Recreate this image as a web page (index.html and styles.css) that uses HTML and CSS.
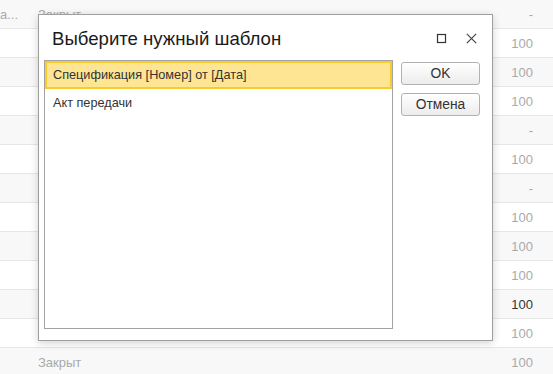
FILE: index.html
```html
<!DOCTYPE html>
<html>
<head>
<meta charset="utf-8">
<title>Выберите нужный шаблон</title>
<link rel="stylesheet" href="styles.css">
</head>
<body>
<div class="table">
  <div class="row odd"><span class="c1">а...</span><span class="c2">Закрыт</span><span class="num">-</span></div>
  <div class="row"><span class="c1"></span><span class="c2"></span><span class="num">100</span></div>
  <div class="row odd"><span class="c1"></span><span class="c2"></span><span class="num">100</span></div>
  <div class="row"><span class="c1"></span><span class="c2"></span><span class="num">100</span></div>
  <div class="row odd"><span class="c1"></span><span class="c2"></span><span class="num">-</span></div>
  <div class="row"><span class="c1"></span><span class="c2"></span><span class="num">100</span></div>
  <div class="row odd"><span class="c1"></span><span class="c2"></span><span class="num">-</span></div>
  <div class="row"><span class="c1"></span><span class="c2"></span><span class="num">100</span></div>
  <div class="row odd"><span class="c1"></span><span class="c2"></span><span class="num">100</span></div>
  <div class="row"><span class="c1"></span><span class="c2"></span><span class="num">100</span></div>
  <div class="row odd"><span class="c1"></span><span class="c2"></span><span class="num dark">100</span></div>
  <div class="row"><span class="c1"></span><span class="c2"></span><span class="num">100</span></div>
  <div class="row odd"><span class="c1"></span><span class="c2">Закрыт</span><span class="num">100</span></div>
</div>

<div class="dialog">
  <div class="dialog-head">
    <div class="dialog-title">Выберите нужный шаблон</div>
    <div class="dialog-tools">
      <svg class="tool" width="11" height="11" viewBox="0 0 11 11"><rect x="1.5" y="1.5" width="8" height="8" fill="none" stroke="#333" stroke-width="1.2"/></svg>
      <svg class="tool" width="11" height="11" viewBox="0 0 11 11"><path d="M0.8 0.8 L10.2 10.2 M10.2 0.8 L0.8 10.2" stroke="#444" stroke-width="1.2" fill="none"/></svg>
    </div>
  </div>
  <div class="dialog-body">
    <div class="list">
      <div class="item selected">Спецификация [Номер] от [Дата]</div>
      <div class="item">Акт передачи</div>
    </div>
    <div class="buttons">
      <div class="btn">OK</div>
      <div class="btn">Отмена</div>
    </div>
  </div>
</div>
</body>
</html>
```
FILE: styles.css
```css
/* Template choice dialog over a faded table */

body
{ margin: 0;
  background: #fff;
  font-family: "Liberation Sans", Arial, sans-serif;
  font-size: 13px;
  overflow: hidden;
}

/* Background table */

.table
{ width: 553px;
}

.row
{ display: flex;
  align-items: center;
  height: 28px;
  border-bottom: 1px solid #e6e6e6;
  background: #fff;
  color: #aaa;
}

.row.odd
{ background: #f8f8f8;
}

.c1
{ width: 38px;
}

.c2
{ flex: 1;
}

.num
{ width: 60px;
  padding-right: 20px;
  text-align: right;
}

.num.dark
{ color: #333;
}

/* Dialog */

.dialog
{ position: absolute;
  left: 38px;
  top: 14px;
  width: 455px;
  height: 327px;
  box-sizing: border-box;
  background: #fff;
  border: 1px solid #9e9e9e;
  box-shadow: 0 2px 8px rgba(0, 0, 0, 0.18);
  display: flex;
  flex-direction: column;
}

.dialog-head
{ height: 45px;
  display: flex;
  align-items: center;
  padding-left: 13px;
  padding-right: 15px;
}

.dialog-title
{ flex: 1;
  font-size: 18.6px;
  color: #1a1a1a;
  padding-top: 2px;
}

.dialog-tools
{ display: flex;
  gap: 19px;
  padding-top: 1px;
}

.tool
{ display: block;
}

.dialog-body
{ flex: 1;
  display: flex;
  padding: 0 12px 11px 5px;
  gap: 8px;
}

.list
{ flex: 1;
  border: 1px solid #a3a3a3;
  color: #333;
  font-size: 12.7px;
}

.item
{ height: 29px;
  line-height: 29px;
  padding-left: 8px;
}

.item.selected
{ height: 24px;
  line-height: 24px;
  padding-left: 6px;
  background: #fde593;
  border: 2px solid #f8cb2c;
}

.buttons
{ width: 79px;
  padding-top: 2px;
  display: flex;
  flex-direction: column;
  gap: 8px;
}

.btn
{ height: 21px;
  line-height: 21px;
  text-align: center;
  color: #333;
  font-size: 13.8px;
  border: 1px solid #b2b2b2;
  border-radius: 3px;
  background: linear-gradient(#ffffff, #ececec);
}
```
